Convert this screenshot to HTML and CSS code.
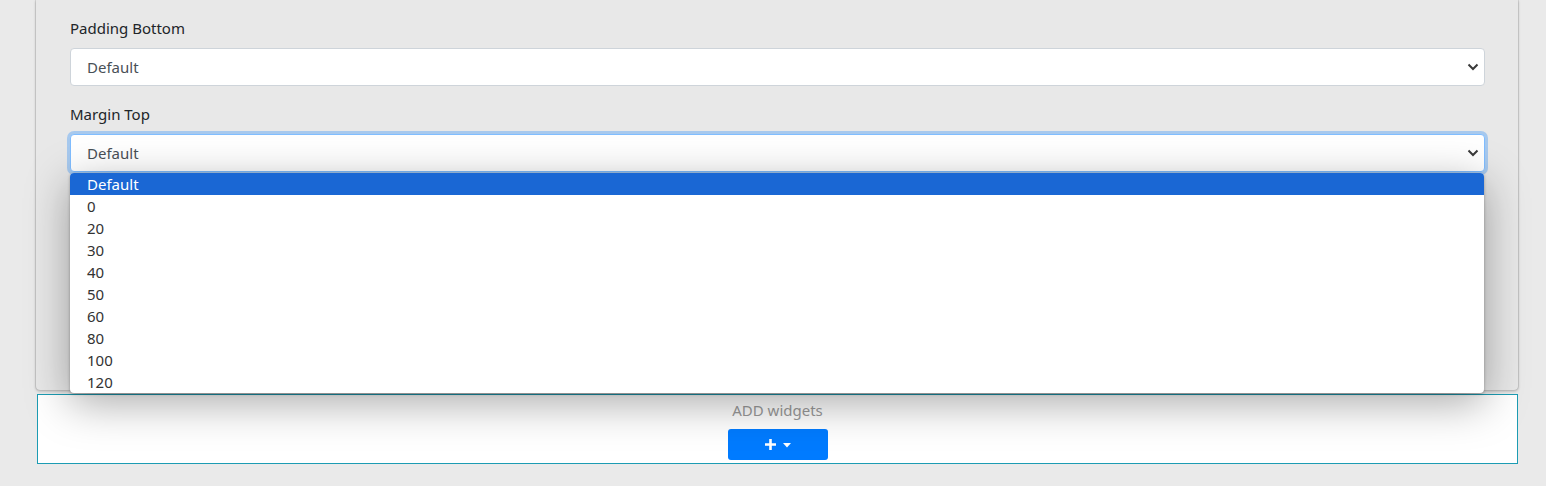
FILE: index.html
```html
<!DOCTYPE html>
<html>
<head>
<meta charset="utf-8">
<link rel="stylesheet" href="styles.css">
</head>
<body>
<div class="wrap">
  <div class="panel">
    <div class="form-group">
      <label class="label">Padding Bottom</label>
      <div class="select">
        <span>Default</span>
        <svg class="chev" width="12" height="8" viewBox="0 0 12 8"><path d="M1.5 1.5 L6 6 L10.5 1.5" fill="none" stroke="#3a3a3a" stroke-width="2"/></svg>
      </div>
    </div>
    <div class="form-group open">
      <label class="label">Margin Top</label>
      <div class="select focus">
        <span>Default</span>
        <svg class="chev" width="12" height="8" viewBox="0 0 12 8"><path d="M1.5 1.5 L6 6 L10.5 1.5" fill="none" stroke="#3a3a3a" stroke-width="2"/></svg>
      </div>
      <ul class="options">
        <li class="active">Default</li>
        <li>0</li>
        <li>20</li>
        <li>30</li>
        <li>40</li>
        <li>50</li>
        <li>60</li>
        <li>80</li>
        <li>100</li>
        <li>120</li>
      </ul>
    </div>
  </div>
  <div class="widgets">
    <div class="widgets-title">ADD widgets</div>
    <button class="btn-add">
      <svg width="13" height="13" viewBox="0 0 13 13"><path d="M6.5 1 V12 M1 6.5 H12" stroke="#fff" stroke-width="2.6"/></svg>
      <svg class="caret" width="8" height="5" viewBox="0 0 8 5"><path d="M0 0 H8 L4 4.5 Z" fill="#fff"/></svg>
    </button>
  </div>
</div>
</body>
</html>
```
FILE: styles.css
```css
* { box-sizing: border-box; }
html, body {
  margin: 0;
  padding: 0;
  background: #eaeaea;
  font-family: "Noto Sans", "Open Sans", sans-serif;
}
.wrap {
  padding-left: 36px;
  width: 1518px;
}
.panel {
  height: 390px;
  background: #e8e8e8;
  border-radius: 0 0 4px 4px;
  box-shadow: 0 1px 3px rgba(0,0,0,.28), -1px 0 0 rgba(0,0,0,.08), 1px 0 0 rgba(0,0,0,.08);
  padding: 16px 33px 0 34px;
}
.form-group {
  margin-bottom: 16px;
}
.form-group.open {
  position: relative;
}
.label {
  display: block;
  font-size: 15px;
  line-height: 24px;
  color: #212529;
  margin-bottom: 8px;
}
.select {
  height: 38px;
  background: #fff;
  border: 1px solid #ced4da;
  border-radius: 4px;
  display: flex;
  align-items: center;
  justify-content: space-between;
  padding: 0 5px 0 16px;
  font-size: 15px;
  color: #495057;
}
.select.focus {
  border-color: #80bdff;
  box-shadow: 0 0 0 3px rgba(0,123,255,.28);
}
.options {
  position: absolute;
  left: 0;
  top: 71px;
  width: 1414px;
  margin: 0;
  padding: 0;
  list-style: none;
  background: #fff;
  border-radius: 4px;
  overflow: hidden;
  box-shadow: 0 10px 44px rgba(0,0,0,.34), 0 1px 3px rgba(0,0,0,.3);
  z-index: 10;
}
.options li {
  height: 22px;
  line-height: 22px;
  padding-left: 17px;
  font-size: 15px;
  color: #333;
}
.options li.active {
  background: #1a67d4;
  color: #fff;
}
.widgets {
  margin-top: 4px;
  margin-left: 1px;
  height: 70px;
  border: 1px solid #1c9cb3;
  background: #fff;
  display: flex;
  flex-direction: column;
  align-items: center;
  padding-top: 4px;
}
.widgets-title {
  font-size: 15px;
  line-height: 22px;
  color: #9a9a9a;
}
.btn-add {
  margin-top: 8px;
  width: 100px;
  height: 31px;
  border: none;
  border-radius: 3px;
  background: #007bff;
  display: flex;
  align-items: center;
  justify-content: center;
  gap: 6px;
  padding: 0;
}
.caret { margin-top: 1px; }
```
